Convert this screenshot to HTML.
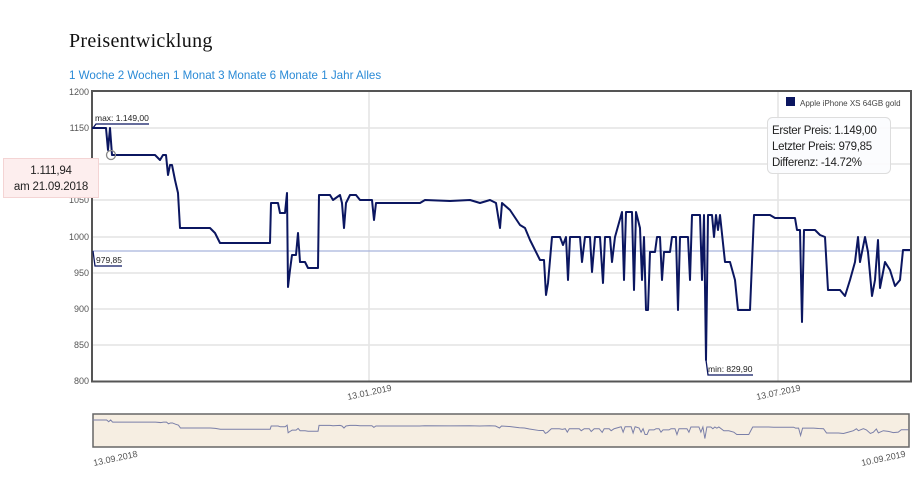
<!DOCTYPE html>
<html><head><meta charset="utf-8"><style>
body{margin:0;width:918px;height:500px;background:#fff;position:relative;overflow:hidden;font-family:"Liberation Sans",sans-serif}
h2{position:absolute;left:69px;top:30px;margin:0;font-family:"Liberation Serif",serif;font-weight:normal;font-size:20px;color:#111;letter-spacing:.3px}
.nav{position:absolute;left:69px;top:69px;font-size:11.6px;color:#2a8ad6}
</style></head><body>
<h2>Preisentwicklung</h2>
<div class="nav">1 Woche 2 Wochen 1 Monat 3 Monate 6 Monate 1 Jahr Alles</div>
<svg width="918" height="500" style="position:absolute;left:0;top:0" font-family="Liberation Sans, sans-serif">
<g stroke="#e4e4e4" stroke-width="1.5">
<line x1="92" x2="911" y1="128" y2="128"/><line x1="92" x2="911" y1="164" y2="164"/><line x1="92" x2="911" y1="200" y2="200"/><line x1="92" x2="911" y1="237" y2="237"/><line x1="92" x2="911" y1="273" y2="273"/><line x1="92" x2="911" y1="309" y2="309"/><line x1="92" x2="911" y1="345" y2="345"/>
<line x1="369" x2="369" y1="91" y2="381"/><line x1="778" x2="778" y1="91" y2="381"/>
</g>
<line x1="92" x2="911" y1="251" y2="251" stroke="#a8b4dc" stroke-width="1.3"/>
<rect x="92" y="91" width="819" height="290.5" fill="none" stroke="#555" stroke-width="2"/>
<g font-size="9" fill="#555" text-anchor="end">
<text x="89" y="95">1200</text><text x="89" y="131">1150</text><text x="89" y="167">1100</text><text x="89" y="203">1050</text><text x="89" y="240">1000</text><text x="89" y="276">950</text><text x="89" y="312">900</text><text x="89" y="348">850</text><text x="89" y="384">800</text>
</g>
<g font-size="9" fill="#555">
<text transform="translate(348,400) rotate(-12)">13.01.2019</text>
<text transform="translate(757,400) rotate(-12)">13.07.2019</text>
<text transform="translate(94,466) rotate(-12)">13.09.2018</text>
<text transform="translate(862,466) rotate(-12)">10.09.2019</text>
</g>
<polyline fill="none" stroke="#0b1660" stroke-width="2" stroke-linejoin="round" points="92,128 106,128 108,150 110,128 112,155 155,155 160,160 163,155 166,155 168,175 170,165 172,165 175,180 178,193 180,228 210,228 215,233 220,243 270,243 271,203 278,203 280,213 285,213 287,193 288,287 290,270 292,255 296,255 298,233 300,262 305,262 308,268 318,268 319,195 330,195 333,200 340,195 342,203 344,228 346,203 350,195 356,195 360,200 372,200 374,220 376,203 420,203 425,200 450,201 470,200 480,203 490,200 496,203 500,228 502,203 510,210 520,225 525,228 530,240 540,260 544,260 546,295 548,283 552,237 560,237 563,245 566,237 568,280 570,237 580,237 582,262 585,237 590,237 592,272 595,237 600,237 603,283 605,237 610,237 612,262 615,237 622,212 624,280 626,212 632,212 634,290 636,212 640,228 642,280 644,237 646,310 648,310 650,252 655,252 657,237 660,237 662,280 664,252 670,252 672,237 676,237 678,310 680,237 688,237 690,280 692,215 700,215 702,280 704,215 706,360 708,215 712,215 714,237 716,215 718,230 720,215 725,262 730,262 735,280 738,310 750,310 752,262 754,215 770,215 775,218 795,218 797,230 800,230 802,322 804,230 815,230 820,235 825,237 828,290 840,290 845,296 850,280 855,262 858,237 860,262 865,237 868,252 872,296 875,280 878,240 880,288 885,262 890,270 895,286 900,280 903,250 910,250"/>
<circle cx="111" cy="155" r="4.5" fill="none" stroke="#888" stroke-width="1.3"/>
<g font-size="8.5" fill="#222" stroke="#0b1660" stroke-width="1.3">
<polyline fill="none" points="93,128 96,124 149,124"/><text x="95" y="121" stroke="none">max: 1.149,00</text>
<polyline fill="none" points="93,251 95,266 122,266"/><text x="96" y="263" stroke="none">979,85</text>
<polyline fill="none" points="706,360 708,375 753,375"/><text x="708" y="372" stroke="none">min: 829,90</text>
</g>
<rect x="786" y="97" width="9" height="9" fill="#0b1660"/>
<text x="800" y="106" font-size="8" fill="#444">Apple iPhone XS 64GB gold</text>
<rect x="767.5" y="117.5" width="123" height="56" rx="5" fill="#fbfcfe" fill-opacity=".9" stroke="#ddd"/>
<g font-size="11.5" fill="#222" letter-spacing="-0.3"><text x="772" y="134">Erster Preis: 1.149,00</text><text x="772" y="150">Letzter Preis: 979,85</text><text x="772" y="166">Differenz: -14.72%</text></g>
<rect x="3.5" y="158.5" width="95" height="39" fill="#fdeeee" stroke="#f4d4d4"/>
<g font-size="11.5" fill="#222" text-anchor="middle" letter-spacing="-0.2"><text x="51" y="174">1.111,94</text><text x="51" y="190">am 21.09.2018</text></g>
<rect x="93" y="414" width="816" height="33" fill="#f6eee2" stroke="#666" stroke-width="1.5"/>
<polyline fill="none" stroke="#7a7fa8" stroke-width="1" vector-effect="non-scaling-stroke" transform="translate(1,420) scale(0.997,0.08) translate(0,-128)" points="92,128 106,128 108,150 110,128 112,155 155,155 160,160 163,155 166,155 168,175 170,165 172,165 175,180 178,193 180,228 210,228 215,233 220,243 270,243 271,203 278,203 280,213 285,213 287,193 288,287 290,270 292,255 296,255 298,233 300,262 305,262 308,268 318,268 319,195 330,195 333,200 340,195 342,203 344,228 346,203 350,195 356,195 360,200 372,200 374,220 376,203 420,203 425,200 450,201 470,200 480,203 490,200 496,203 500,228 502,203 510,210 520,225 525,228 530,240 540,260 544,260 546,295 548,283 552,237 560,237 563,245 566,237 568,280 570,237 580,237 582,262 585,237 590,237 592,272 595,237 600,237 603,283 605,237 610,237 612,262 615,237 622,212 624,280 626,212 632,212 634,290 636,212 640,228 642,280 644,237 646,310 648,310 650,252 655,252 657,237 660,237 662,280 664,252 670,252 672,237 676,237 678,310 680,237 688,237 690,280 692,215 700,215 702,280 704,215 706,360 708,215 712,215 714,237 716,215 718,230 720,215 725,262 730,262 735,280 738,310 750,310 752,262 754,215 770,215 775,218 795,218 797,230 800,230 802,322 804,230 815,230 820,235 825,237 828,290 840,290 845,296 850,280 855,262 858,237 860,262 865,237 868,252 872,296 875,280 878,240 880,288 885,262 890,270 895,286 900,280 903,250 910,250"/>
</svg>
</body></html>
